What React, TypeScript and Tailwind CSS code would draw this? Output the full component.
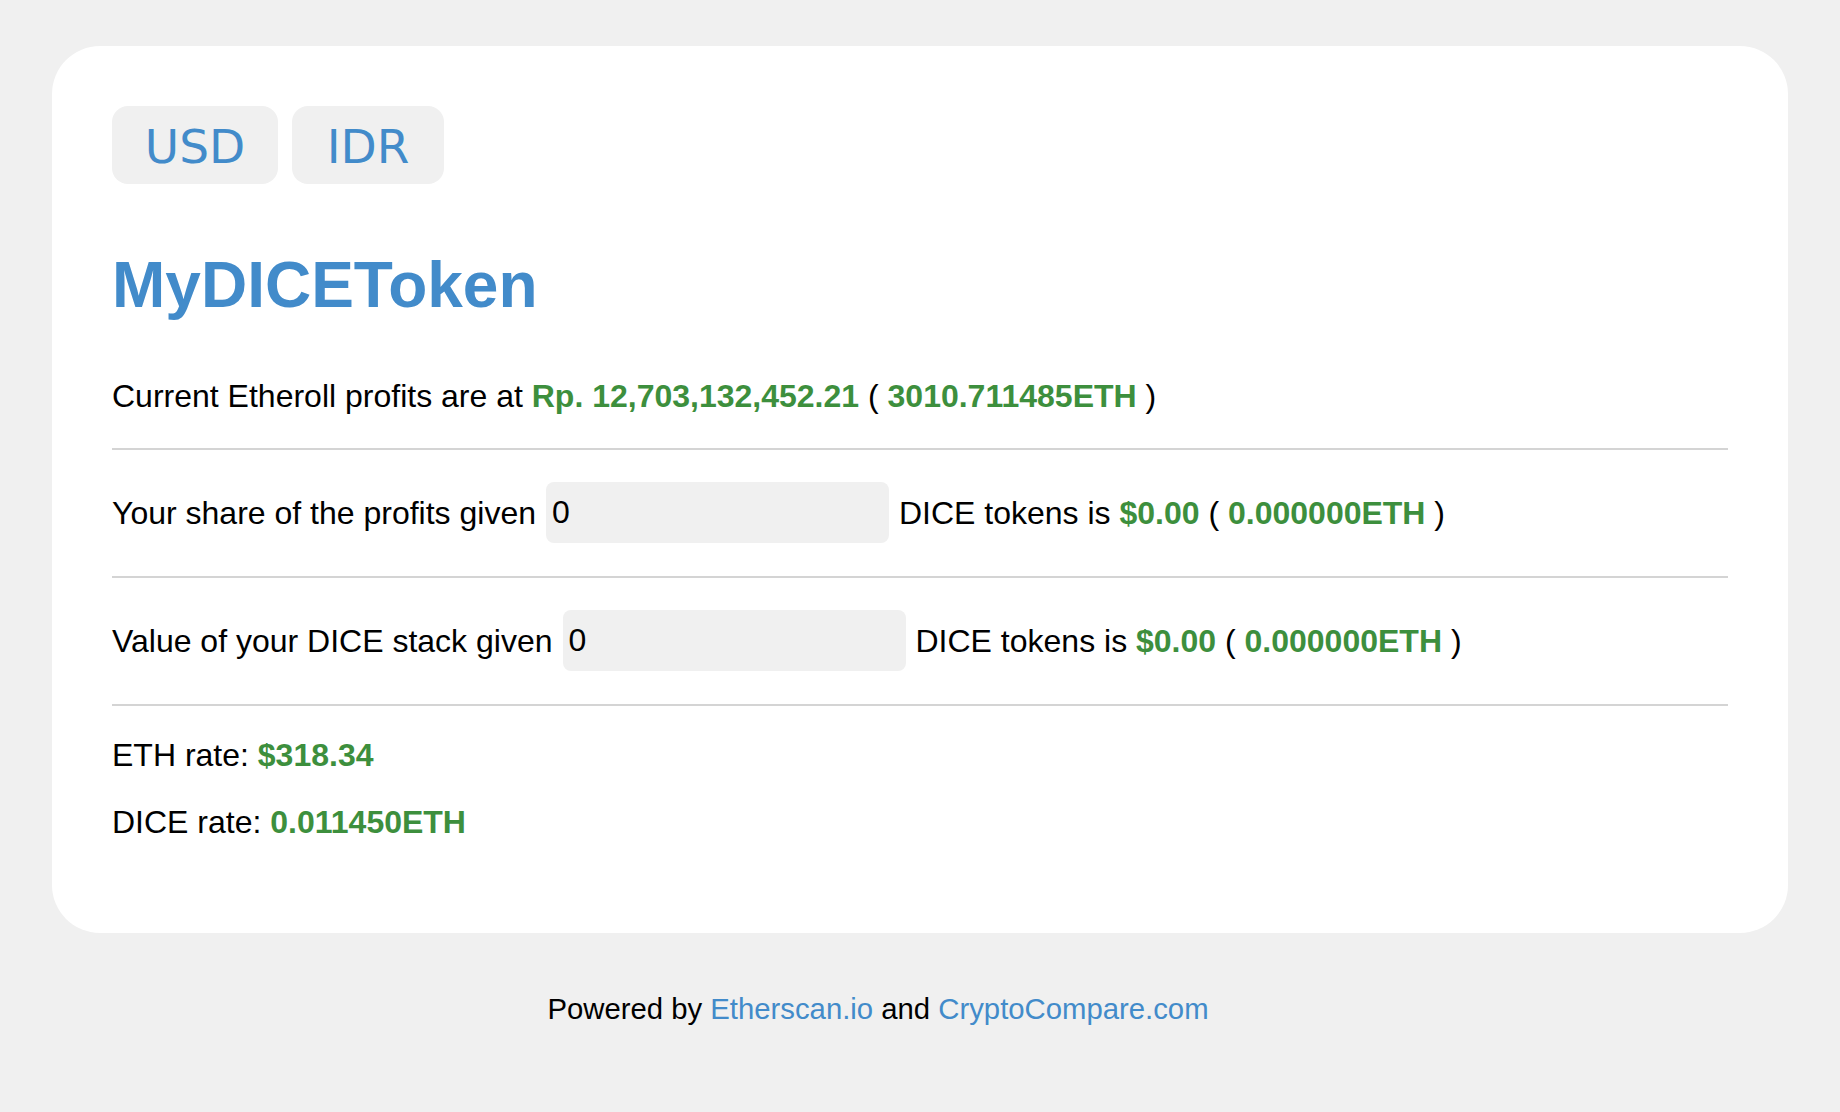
export default function App() {
  const green = "font-bold text-[#3d8f3d]";

  return (
    <div
      className="min-h-screen bg-[#f0f0f0] px-[52px] pt-[46px] text-black"
      style={{ fontFamily: '"Liberation Sans", Arial, sans-serif' }}
    >
      <div className="rounded-[48px] bg-white px-[60px] pt-[60px] pb-[91px]">
        <div className="flex gap-[14px]">
          <button
            className="flex h-[78px] w-[166px] items-center justify-center rounded-[16px] bg-[#f0f0f0] pt-[4px] text-[47px] text-[#428bca]"
            style={{ fontFamily: '"DejaVu Sans", Verdana, sans-serif' }}
          >
            USD
          </button>
          <button
            className="flex h-[78px] w-[152px] items-center justify-center rounded-[16px] bg-[#f0f0f0] pt-[4px] text-[47px] text-[#428bca]"
            style={{ fontFamily: '"DejaVu Sans", Verdana, sans-serif' }}
          >
            IDR
          </button>
        </div>

        <h1 className="mt-[69px] text-[64px] font-bold leading-none text-[#428bca]">
          MyDICEToken
        </h1>

        <p className="mt-[59px] text-[32px] leading-[40px]">
          Current Etheroll profits are at{" "}
          <span className={green}>Rp. 12,703,132,452.21</span> ({" "}
          <span className={green}>3010.711485ETH</span> )
        </p>

        <hr className="mt-[32px] h-[2px] border-0 bg-[#d4d4d4]" />

        <div className="mt-[32px] flex items-center text-[32px] leading-[40px]">
          <span>Your share of the profits given</span>
          <input
            defaultValue="0"
            className="mx-[10px] h-[61px] w-[343px] rounded-[8px] bg-[#f0f0f0] px-[6px] text-[32px] outline-none"
          />
          <span>
            DICE tokens is <span className={green}>$0.00</span> ({" "}
            <span className={green}>0.000000ETH</span> )
          </span>
        </div>

        <hr className="mt-[33px] h-[2px] border-0 bg-[#d4d4d4]" />

        <div className="mt-[32px] flex items-center text-[32px] leading-[40px]">
          <span>Value of your DICE stack given</span>
          <input
            defaultValue="0"
            className="mx-[10px] h-[61px] w-[343px] rounded-[8px] bg-[#f0f0f0] px-[6px] text-[32px] outline-none"
          />
          <span>
            DICE tokens is <span className={green}>$0.00</span> ({" "}
            <span className={green}>0.000000ETH</span> )
          </span>
        </div>

        <hr className="mt-[33px] h-[2px] border-0 bg-[#d4d4d4]" />

        <p className="mt-[29px] text-[32px] leading-[40px]">
          ETH rate: <span className={green}>$318.34</span>
        </p>
        <p className="mt-[27px] text-[32px] leading-[40px]">
          DICE rate: <span className={green}>0.011450ETH</span>
        </p>
      </div>

      <p className="mt-[58px] pr-[84px] text-center text-[29.3px] leading-[36px]">
        Powered by <a className="text-[#428bca]">Etherscan.io</a> and{" "}
        <a className="text-[#428bca]">CryptoCompare.com</a>
      </p>
    </div>
  );
}
